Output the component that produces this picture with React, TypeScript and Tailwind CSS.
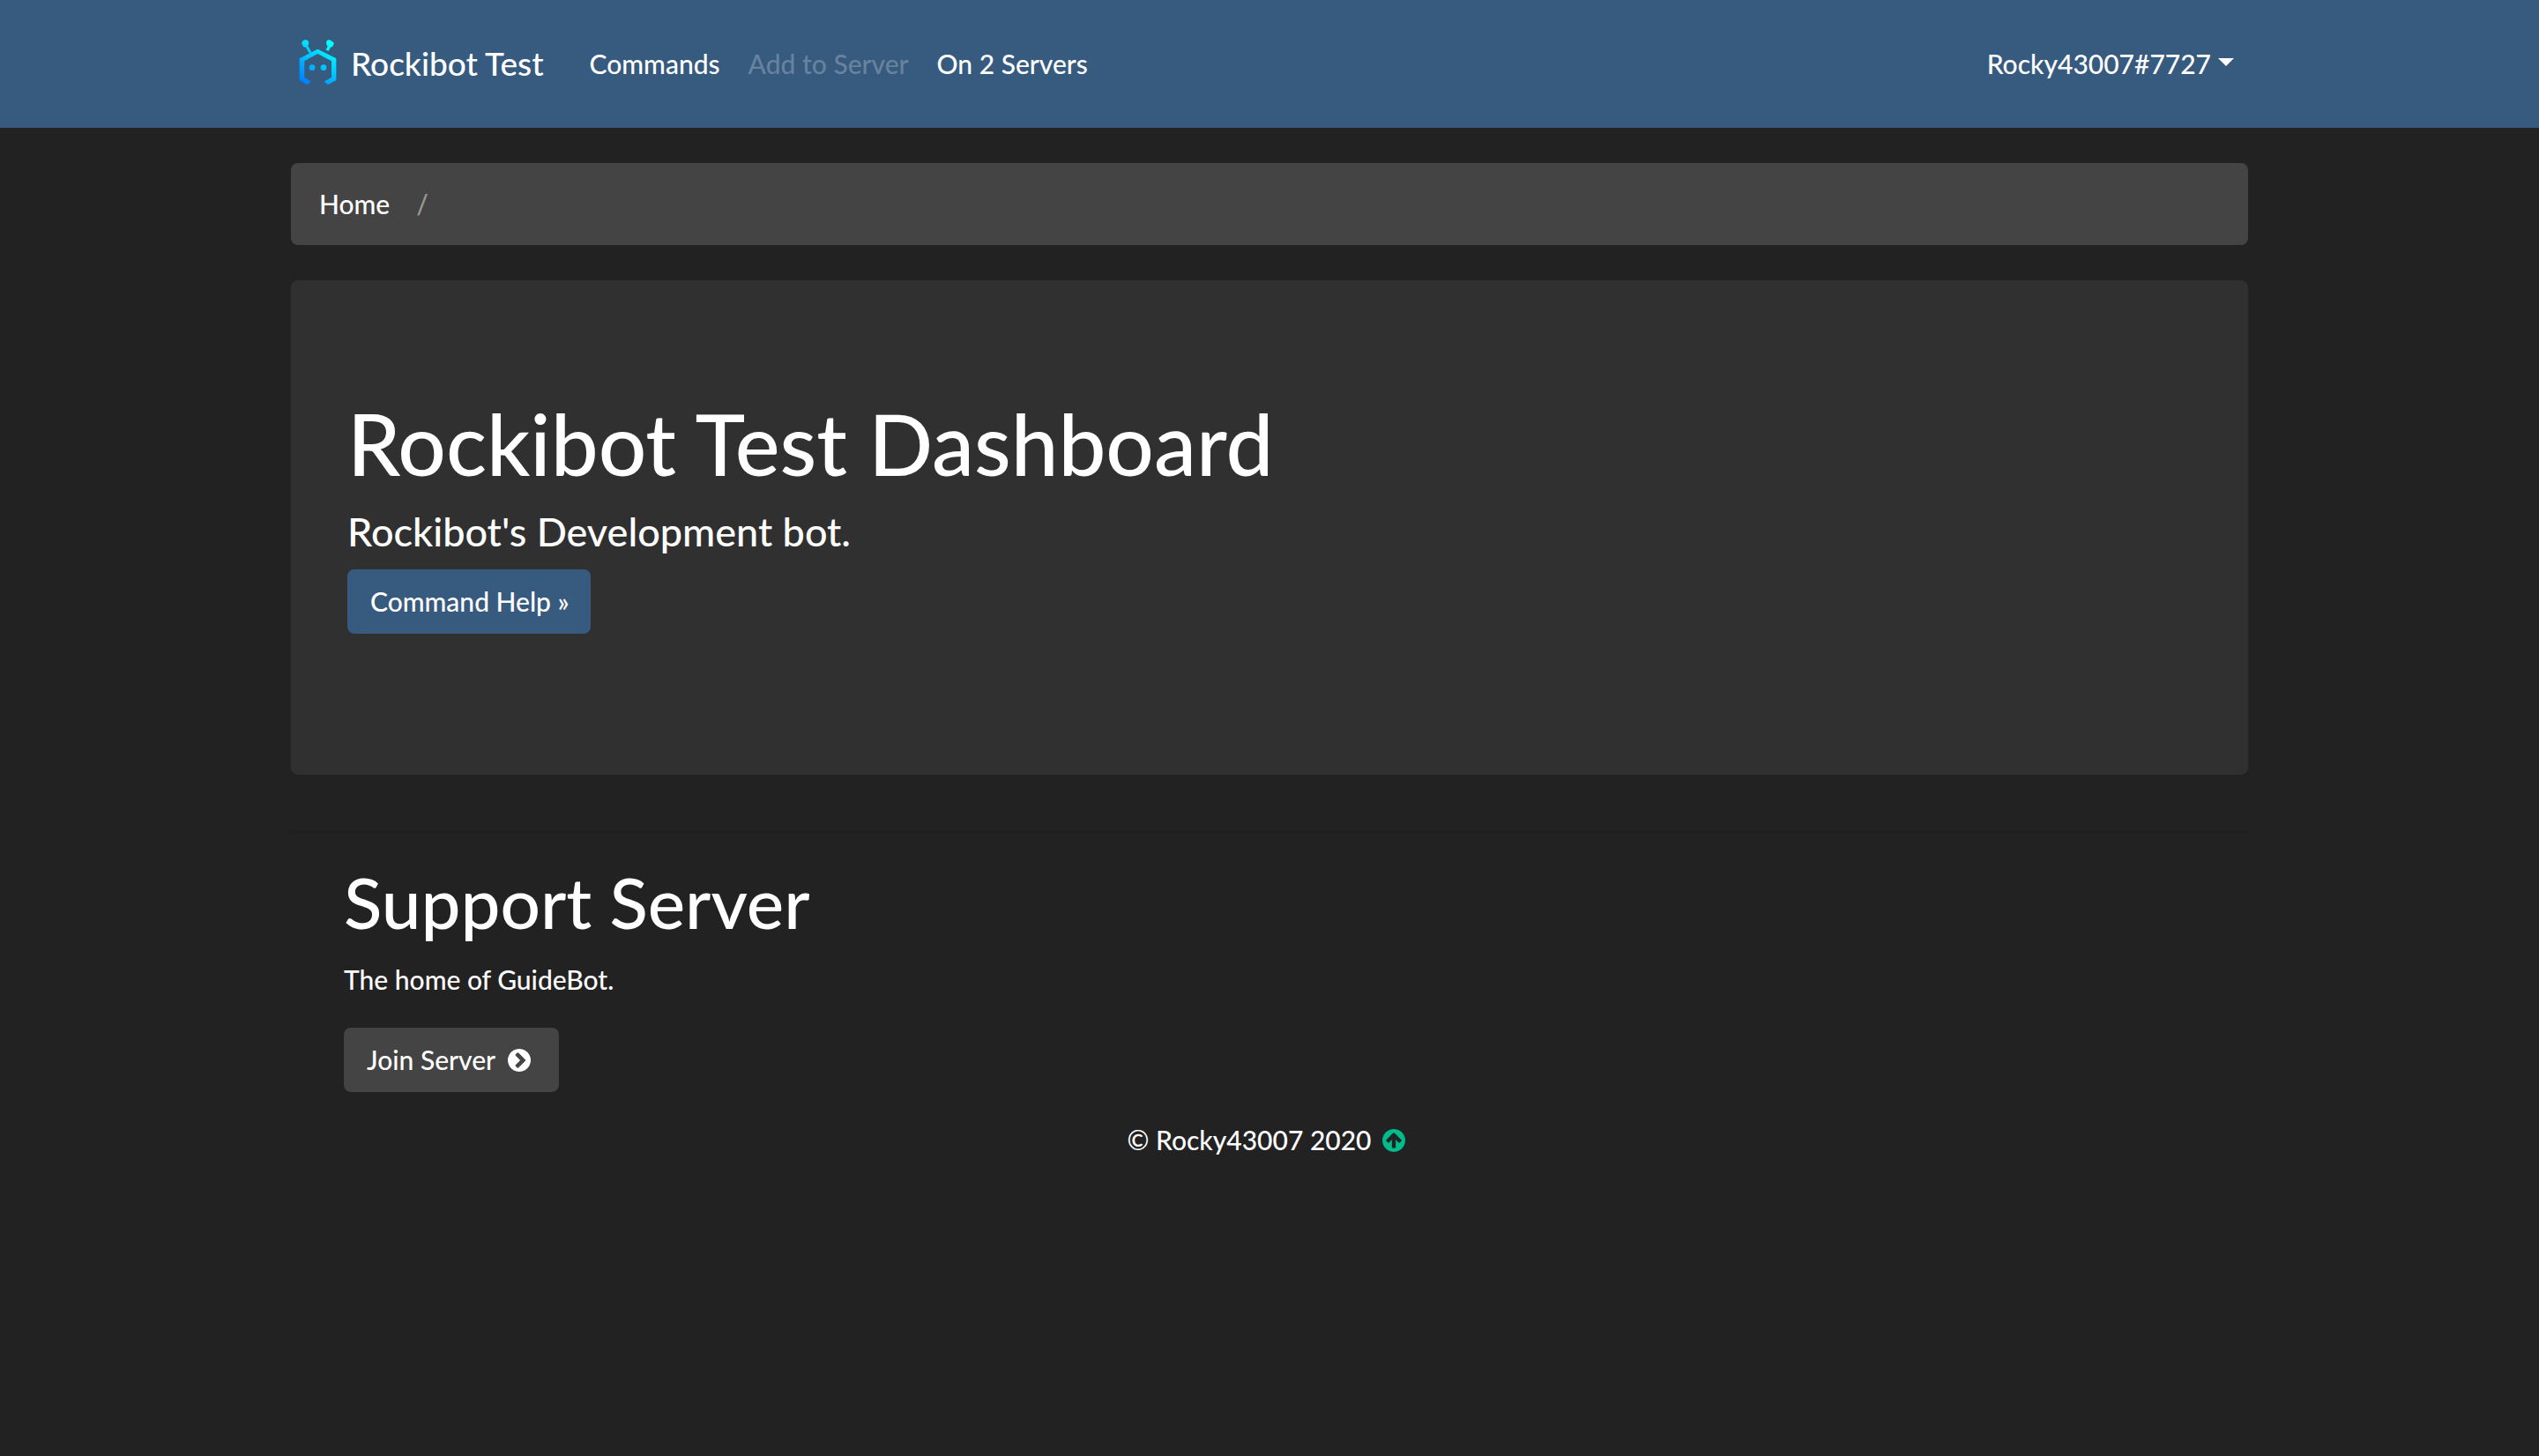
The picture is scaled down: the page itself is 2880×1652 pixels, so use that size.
import type { ReactNode } from "react";

const CIRCLE =
  "M1664 896q0 209-103 385.5t-279.5 279.5-385.5 103-385.5-103-279.5-279.5-103-385.5 103-385.5 279.5-279.5 385.5-103 385.5 103 279.5 279.5 103 385.5z";
const CHEVRON =
  "M845 1395l454-454q19-19 19-45t-19-45l-454-454q-19-19-45-19t-45 19l-102 102q-19 19-19 45t19 45l307 307-307 307q-19 19-19 45t19 45l102 102q19 19 45 19t45-19z";
const ARROW_UP =
  "M1412 895q0-27-18-45l-362-362-91-91q-18-18-45-18t-45 18l-91 91-362 362q-18 18-18 45t18 45l91 91q18 18 45 18t45-18l189-189v502q0 26 19 45t45 19h128q26 0 45-19t19-45v-502l189 189q19 19 45 19t45-19l91-91q18-18 18-45z";

function CircleIcon({ glyph, className }: { glyph: string; className?: string }) {
  return (
    <svg viewBox="128 128 1536 1536" fill="currentColor" fillRule="evenodd" aria-hidden="true" className={`size-[26px] ${className ?? ""}`}>
      <path d={`${CIRCLE}${glyph}`} />
    </svg>
  );
}

function Logo() {
  return (
    <svg viewBox="30 36 180 180" aria-hidden="true" className="size-[60px] shrink-0">
      <defs>
        <linearGradient id="bot" gradientUnits="userSpaceOnUse" x1="62" y1="180" x2="150" y2="60">
          <stop offset="0" stopColor="#0080ff" />
          <stop offset="1" stopColor="#00ffff" />
        </linearGradient>
      </defs>
      <g fill="url(#bot)" stroke="none">
        <path d="M121 77L184 109V183L157 198L142 188L168 173V118L121 93L76 118V173L99 188L84 198L59 183V109L90 93Z" />
        <path d="M66 57L71 48L80 45L88 48L91 57L88 67L100 88L93 92L81 71L73 70Z" />
        <path d="M150 58L152 48L159 45L168 49L177 57L172 68L165 71L158 84L148 79L155 69Z" />
        <circle cx="102" cy="140" r="10" />
        <circle cx="141" cy="140" r="10" />
      </g>
    </svg>
  );
}

function Container({ children, className }: { children: ReactNode; className?: string }) {
  return <div className={`mx-auto w-full max-w-[2252px] px-4 ${className ?? ""}`}>{children}</div>;
}

export default function App() {
  return (
    <div className="min-h-screen bg-[#222222] font-['Lato',sans-serif] text-[30px] leading-[45px] font-medium text-white">
      <header className="bg-[#375a7f] py-8">
        <Container>
          <nav className="flex min-h-[81px] flex-wrap items-center">
            <a href="#home" className="mr-9 flex items-center gap-2 pb-0.5 text-[37px] leading-[54px]">
              <Logo />
              Rockibot Test
            </a>
            <ul className="flex flex-wrap items-center">
              <li><a href="#commands" className="block px-4">Commands</a></li>
              <li><a href="#add" aria-disabled="true" className="block px-4 text-white/25">Add to Server</a></li>
              <li><a href="#servers" className="block px-4">On 2 Servers</a></li>
            </ul>
            <button type="button" className="ml-auto flex items-center gap-2 px-4">
              Rocky43007#7727
              <svg viewBox="0 0 18 9" fill="currentColor" aria-hidden="true" className="mb-1 h-[9px] w-[18px]">
                <path d="M0 0H18L9 9Z" />
              </svg>
            </button>
          </nav>
        </Container>
      </header>

      <Container className="pt-10">
        <nav aria-label="Breadcrumb" className="rounded-lg bg-[#444444] px-8 py-6">
          <ol className="flex gap-[30px]">
            <li><a href="#home">Home</a></li>
            <li aria-hidden="true" className="text-[#999999]">/</li>
          </ol>
        </nav>

        <main>
          <section className="mt-10 rounded-lg bg-[#303030] px-16 pt-32 pb-40">
            <h1 className="text-[96px] leading-[114px]">Rockibot Test Dashboard</h1>
            <p className="my-4 text-[45px] leading-[54px]">Rockibot's Development bot.</p>
            <a href="#help" className="flex w-fit rounded-lg bg-[#375a7f] py-[14px] pr-6 pl-[26px]">Command Help »</a>
          </section>

          <hr className="mt-16 mb-8 border-t-2 border-[#1f1f1f]" />

          <section className="px-[60px]">
            <h2 className="text-[80px] leading-[92px]">Support Server</h2>
            <p className="mt-5 mb-8">The home of GuideBot.</p>
            <a href="#join" className="flex w-fit items-center gap-3.5 rounded-lg bg-[#444444] py-[14px] pr-8 pl-[26px]">
              Join Server
              <CircleIcon glyph={CHEVRON} />
            </a>
          </section>
        </main>

        <footer className="flex items-center justify-center gap-3 py-8">
          <p>© Rocky43007 2020</p>
          <a href="#top" aria-label="Back to top" className="mr-2 text-[#00bc8c]">
            <CircleIcon glyph={ARROW_UP} />
          </a>
        </footer>
      </Container>
    </div>
  );
}
